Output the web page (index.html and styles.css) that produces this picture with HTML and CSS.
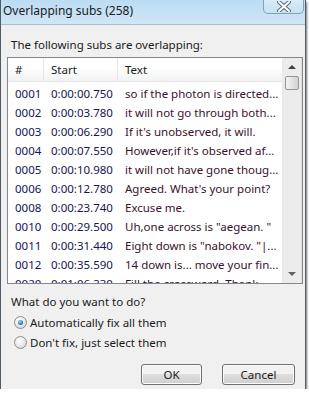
FILE: index.html
```html
<!DOCTYPE html>
<html lang="en">
<head>
  <meta charset="UTF-8" />
  <title>Overlapping subs</title>
  <link rel="stylesheet" href="styles.css">
</head>
<body>

<div class="window">
  <div class="titlebar">
    <span class="title">Overlapping subs (258)</span>
    <div class="close">
      <svg width="14" height="11" viewBox="0 0 14 11">
        <path d="M2 1 L12 10 M12 1 L2 10" stroke="#5a6a78" stroke-width="4" stroke-linecap="round"/>
        <path d="M2 1 L12 10 M12 1 L2 10" stroke="#ffffff" stroke-width="2" stroke-linecap="round"/>
      </svg>
    </div>
  </div>

  <div class="client">
    <p class="label">The following subs are overlapping:</p>

    <div class="listbox">
      <div class="list">
        <div class="row head">
          <span class="c-num">#</span>
          <span class="c-start">Start</span>
          <span class="c-text">Text</span>
        </div>
        <div class="rows">
          <div class="row"><span class="c-num">0001</span><span class="c-start">0:00:00.750</span><span class="c-text">so if the photon is directed...</span></div>
          <div class="row"><span class="c-num">0002</span><span class="c-start">0:00:03.780</span><span class="c-text">it will not go through both...</span></div>
          <div class="row"><span class="c-num">0003</span><span class="c-start">0:00:06.290</span><span class="c-text">If it's unobserved, it will.</span></div>
          <div class="row"><span class="c-num">0004</span><span class="c-start">0:00:07.550</span><span class="c-text">However,if it's observed af...</span></div>
          <div class="row"><span class="c-num">0005</span><span class="c-start">0:00:10.980</span><span class="c-text">it will not have gone thoug...</span></div>
          <div class="row"><span class="c-num">0006</span><span class="c-start">0:00:12.780</span><span class="c-text">Agreed. What's your point?</span></div>
          <div class="row"><span class="c-num">0008</span><span class="c-start">0:00:23.740</span><span class="c-text">Excuse me.</span></div>
          <div class="row"><span class="c-num">0010</span><span class="c-start">0:00:29.500</span><span class="c-text">Uh,one across is "aegean. "</span></div>
          <div class="row"><span class="c-num">0011</span><span class="c-start">0:00:31.440</span><span class="c-text">Eight down is "nabokov. "|...</span></div>
          <div class="row"><span class="c-num">0012</span><span class="c-start">0:00:35.590</span><span class="c-text">14 down is... move your fin...</span></div>
          <div class="row"><span class="c-num">0020</span><span class="c-start">0:01:06.330</span><span class="c-text">Fill the crossword. Thank...</span></div>
        </div>
      </div>
      <div class="scrollbar">
        <div class="arrow up"></div>
        <div class="thumb"></div>
        <div class="track"></div>
        <div class="arrow down"></div>
      </div>
    </div>

    <p class="label question">What do you want to do?</p>
    <label class="radio"><span class="dot on"></span>Automatically fix all them</label>
    <label class="radio"><span class="dot"></span>Don't fix, just select them</label>

    <div class="buttons">
      <button class="btn ok">OK</button>
      <button class="btn cancel">Cancel</button>
    </div>
  </div>
</div>

</body>
</html>
```

FILE: styles.css
```css
:root {
  --ui-font: "Noto Sans", "Open Sans", sans-serif;
  --face: #f0f0f0;
  --frame-dark: #4d5c66;
  --list-border: #828790;
}
body {
  margin: 0;
  background: white;
  font-family: var(--ui-font);
  font-size: 11.5px;
  color: #1a1a1a;
}
.window {
  width: 304px;
  height: 389px;
  display: flex;
  flex-direction: column;
  border-left: 1px solid var(--frame-dark);
  border-right: 1px solid var(--frame-dark);
  box-shadow: 1px 2px 2px rgba(0, 0, 0, 0.55);
  background: var(--face);
}
.titlebar {
  height: 24px;
  flex: none;
  display: flex;
  justify-content: space-between;
  align-items: flex-start;
  background: linear-gradient(#bcdcf3, #cfe7f7);
}
.title {
  padding: 3px 0 0 2px;
  font-size: 12px;
  line-height: 16px;
  color: #202020;
}
.close {
  width: 41px;
  height: 14px;
  margin-right: 1px;
  display: flex;
  justify-content: center;
  align-items: flex-start;
  padding-top: 1px;
  box-sizing: border-box;
  border: 1px solid #8aa0b2;
  border-top: none;
  border-radius: 0 0 5px 5px;
  background: linear-gradient(#d8ecf9, #c6e0f3);
}
.client {
  flex: 1;
  display: flex;
  flex-direction: column;
  padding: 12px 2px 0 6px;
  border-top: 1px solid #a9bccb;
}
.label {
  margin: 0 0 5px 4px;
  line-height: 15px;
}
.listbox {
  height: 225px;
  display: flex;
  border: 1px solid var(--list-border);
  background: white;
  overflow: hidden;
}
.list {
  flex: 1;
  overflow: hidden;
}
.row {
  display: flex;
  height: 19px;
  align-items: center;
  white-space: nowrap;
  color: #14145a;
}
.row span {
  overflow: hidden;
  padding-left: 7px;
  box-sizing: border-box;
}
.c-num { width: 36px; flex: none; }
.c-start { width: 74px; flex: none; }
.c-text { flex: 1; color: #3a0f2e; }
.row.head {
  height: 23px;
  color: #1a1a1a;
  background: linear-gradient(#ffffff 40%, #f1f2f4);
  border-bottom: 1px solid #e5e5e5;
  margin-bottom: 2px;
}
.row.head span {
  height: 23px;
  line-height: 23px;
  border-right: 1px solid #e3e5e7;
}
.row.head .c-text { color: #1a1a1a; border-right: none; }
.scrollbar {
  width: 18px;
  flex: none;
  display: flex;
  flex-direction: column;
  align-items: center;
  background: #ececec;
  border-left: 1px solid #e8e8e8;
  border-right: 1px solid #dadada;
}
.arrow {
  height: 17px;
  width: 100%;
  flex: none;
  position: relative;
}
.arrow::after {
  content: "";
  position: absolute;
  left: 5px;
  top: 7px;
  border-left: 4px solid transparent;
  border-right: 4px solid transparent;
}
.arrow.up::after { border-bottom: 4px solid #404040; }
.arrow.down::after { border-top: 4px solid #606060; top: 6px; }
.thumb {
  width: 14px;
  height: 14px;
  flex: none;
  margin-top: 1px;
  border: 1px solid #959595;
  border-radius: 2px;
  box-sizing: border-box;
  background: linear-gradient(90deg, #f4f4f4, #e0e0e0 60%, #d2d2d2);
}
.track { flex: 1; }
.question {
  margin-top: 10px;
  margin-bottom: 6px;
}
.radio {
  display: flex;
  align-items: center;
  height: 15px;
  margin: 0 0 5px 7px;
  gap: 3px;
  line-height: 15px;
}
.dot {
  width: 13px;
  height: 13px;
  box-sizing: border-box;
  border-radius: 50%;
  border: 1px solid #8e8f8f;
  background: radial-gradient(circle at 40% 35%, #ffffff, #e6e6e6 55%, #c8c8c8);
  display: flex;
  justify-content: center;
  align-items: center;
}
.dot.on::after {
  content: "";
  width: 5px;
  height: 5px;
  border-radius: 50%;
  background: radial-gradient(circle at 40% 35%, #9fd7f6, #1e6fae 70%, #124a7a);
}
.buttons {
  display: flex;
  justify-content: flex-end;
  gap: 20px;
  margin-top: 9px;
  padding-right: 8px;
}
.btn {
  height: 21px;
  padding: 0;
  font-family: inherit;
  font-size: 11.5px;
  color: #1a1a1a;
  border: 1px solid #707070;
  border-radius: 3px;
  background: linear-gradient(#f2f2f2 45%, #dddddd 50%, #cfcfcf);
  box-shadow: inset 0 0 0 1px #fcfcfc;
}
.btn.ok { width: 61px; }
.btn.cancel { width: 73px; }
```
